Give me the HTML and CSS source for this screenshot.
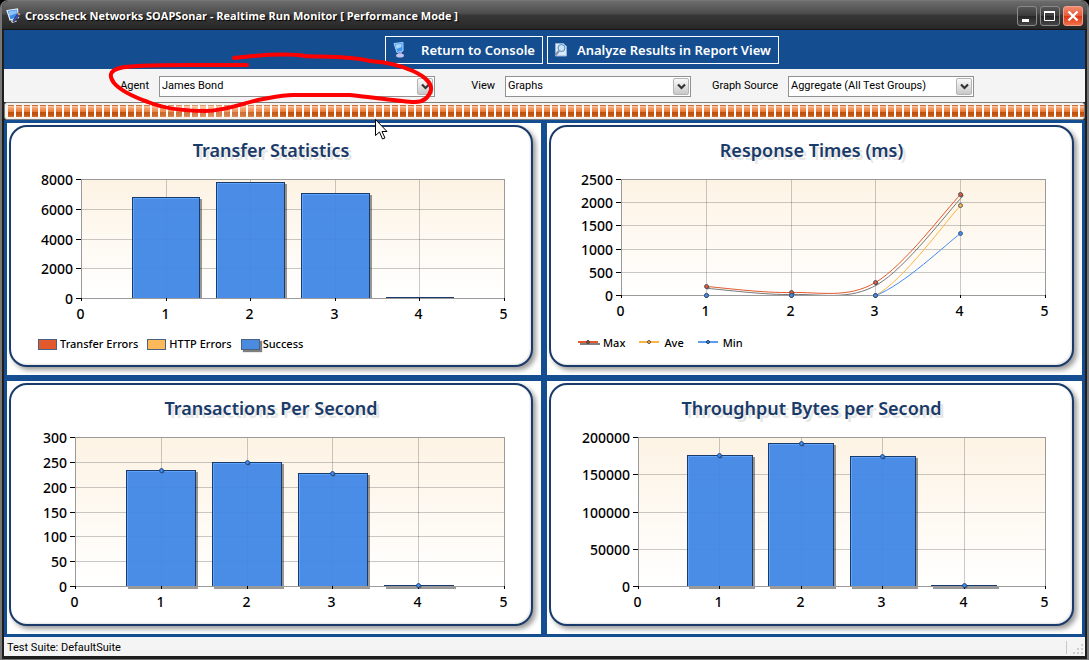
FILE: index.html
```html
<!DOCTYPE html>
<html lang="en">
<head>
<meta charset="utf-8">
<title>Crosscheck Networks SOAPSonar</title>
<link rel="stylesheet" href="styles.css">
</head>
<body>
<div class="window">
  <header class="titlebar">
    <svg class="app-icon" width="16" height="16" viewBox="0 0 16 16" aria-hidden="true">
      <path d="M1 2.500 11.500 1l1 8.500L4 12z" fill="#3b8ae6" stroke="#e4eefa" stroke-width="1.200"/>
      <path d="M2.500 3.500 10.500 2.300l.4 3L3.300 8z" fill="#8cc2f8"/>
      <path d="M4.500 12.500l5-1 1.500 2-5 1.500z" fill="#c6d3e6"/>
      <path d="M12.500 4.500 14.500 6 9 13l-2 .8.500-2z" fill="#3a4fc0" stroke="#2a2a44" stroke-width=".7"/>
      <path d="M12.500 4.500 14.500 6l-1.200 1.600-2-1.500z" fill="#e09a5a"/>
    </svg>
    <h1 class="titlebar-text">Crosscheck Networks SOAPSonar - Realtime Run Monitor [ Performance Mode ]</h1>
    <div class="window-buttons">
      <button class="window-button" type="button" aria-label="Minimize"><svg width="18" height="18" viewBox="0 0 18 18"><path d="M4 12h7v3H4z" fill="#fff"/></svg></button>
      <button class="window-button" type="button" aria-label="Maximize"><svg width="18" height="18" viewBox="0 0 18 18"><path d="M3.500 4.500h10v9h-10z" fill="none" stroke="#fff"/><path d="M3 4h11v2H3z" fill="#fff"/></svg></button>
      <button class="window-button window-button-close" type="button" aria-label="Close"><svg width="18" height="18" viewBox="0 0 18 18"><path d="M4.500 4.500l9 9m0-9l-9 9" stroke="#fff" stroke-width="2.400"/></svg></button>
    </div>
  </header>

  <nav class="toolbar">
    <button class="tool-button tool-button-console" type="button">
      <svg width="16" height="18" viewBox="0 0 16 18" aria-hidden="true">
        <path d="M3 2.500 12 1.500v8.500l-6 1.500z" fill="#3f97ee" stroke="#a9d4ff"/>
        <path d="M4.500 3.500l6-.6v3L5.500 8z" fill="#a6d8ff"/>
        <path d="M7 11.500l4-1v3H7z" fill="#8f93dc"/>
        <ellipse cx="9" cy="14.500" rx="4" ry="2" fill="#c0c3ee"/>
      </svg>
      Return to Console
    </button>
    <button class="tool-button" type="button">
      <svg width="16" height="18" viewBox="0 0 16 18" aria-hidden="true">
        <path d="M2.500 2.500h8l3 3V15h-11z" fill="#dce9f8" stroke="#8fb2dc"/>
        <circle cx="8.500" cy="7" r="3.500" fill="#c4e3fa" stroke="#5d86b8"/>
        <path d="M6 10l-3.500 4" stroke="#7c8cab" stroke-width="2"/>
      </svg>
      Analyze Results in Report View
    </button>
  </nav>

  <form class="filters">
    <label for="agent">Agent</label>
    <div class="dropdown"><select id="agent"><option>James Bond</option></select><span class="dropdown-arrow"><svg width="9" height="7" viewBox="0 0 9 7"><path d="M1 1.500l3.500 3.500L8 1.500" fill="none" stroke="#333" stroke-width="2.200"/></svg></span></div>
    <label for="view">View</label>
    <div class="dropdown"><select id="view"><option>Graphs</option></select><span class="dropdown-arrow"><svg width="9" height="7" viewBox="0 0 9 7"><path d="M1 1.500l3.500 3.500L8 1.500" fill="none" stroke="#333" stroke-width="2.200"/></svg></span></div>
    <label for="source">Graph Source</label>
    <div class="dropdown"><select id="source"><option>Aggregate (All Test Groups)</option></select><span class="dropdown-arrow"><svg width="9" height="7" viewBox="0 0 9 7"><path d="M1 1.500l3.500 3.500L8 1.500" fill="none" stroke="#333" stroke-width="2.200"/></svg></span></div>
  </form>

  <div class="progress" role="progressbar" aria-label="Test run"><div class="progress-blocks"></div></div>

  <main class="charts">
    <section class="panel"><div class="card">
      <h2 class="card-title">Transfer Statistics</h2>
      <svg class="chart" id="chart-transfer" viewBox="0 0 520 160"></svg>
      <ul class="legend">
        <li><span class="swatch swatch-red"></span>Transfer Errors</li>
        <li><span class="swatch swatch-amber"></span>HTTP Errors</li>
        <li><span class="swatch swatch-blue"></span>Success</li>
      </ul>
    </div></section>
    <section class="panel"><div class="card">
      <h2 class="card-title">Response Times (ms)</h2>
      <svg class="chart" id="chart-response" viewBox="0 0 521 160"></svg>
      <ul class="legend legend-lines">
        <li><svg width="22" height="8" viewBox="0 0 22 8"><path d="M2 5h20" stroke="#808080" stroke-width="2"/><path d="M0 3h20" stroke="#e2592b" stroke-width="2"/><circle cx="10" cy="3" r="1.500" fill="#b8402a" stroke="#444"/></svg>Max</li>
        <li><svg width="22" height="8" viewBox="0 0 22 8"><path d="M0 3h20" stroke="#fcb441" stroke-width="2"/><circle cx="10" cy="3" r="1.500" fill="#fcb441" stroke="#555"/></svg>Ave</li>
        <li><svg width="22" height="8" viewBox="0 0 22 8"><path d="M0 3h20" stroke="#5a9cf0" stroke-width="2"/><circle cx="10" cy="3" r="1.500" fill="#418cf0" stroke="#1a3b69"/></svg>Min</li>
      </ul>
    </div></section>
    <section class="panel"><div class="card">
      <h2 class="card-title">Transactions Per Second</h2>
      <svg class="chart" id="chart-transactions" viewBox="0 0 520 190"></svg>
    </div></section>
    <section class="panel"><div class="card">
      <h2 class="card-title">Throughput Bytes per Second</h2>
      <svg class="chart" id="chart-throughput" viewBox="0 0 521 190"></svg>
    </div></section>
  </main>

  <footer class="statusbar">
    <span>Test Suite: DefaultSuite</span>
    <svg width="18" height="15" viewBox="0 0 18 15" aria-hidden="true"><path d="M.5 1v13" stroke="#c8c8c8"/><path d="M15 4h2v2h-2zM11 8h2v2h-2zM15 8h2v2h-2zM7 12h2v2H7zM11 12h2v2h-2zM15 12h2v2h-2z" fill="#cfcfcf"/></svg>
  </footer>
</div>

<svg class="markup" width="440" height="145" viewBox="0 0 440 145" aria-hidden="true">
  <path d="M247 65H190C160 65 130 65 120 68C109 71 109 76 114 83C120 90 134 97 148 102C165 109 185 111 205 111C225 111 240 104 258 100C270 98 282 95 293 95H350C370 97 395 101 412 102C424 103 429 97 431 90C432 83 424 76 413 71C400 65 385 62 370 61C350 56 325 57 305 56C288 53 260 55 234 58" fill="none" stroke="#f00" stroke-width="4" stroke-linecap="round" stroke-linejoin="round"/>
  <path d="M375.500 119.500v16l4-3.500 3 7 2.500-1-3-6.500h5z" fill="#fff" stroke="#000"/>
</svg>
<script src="charts.js"></script>
</body>
</html>
```
FILE: styles.css
```css
* { box-sizing: border-box; }

body {
  margin: 0;
  background: #000;
  color: #000;
  font: 11px/16px Roboto, "Liberation Sans", sans-serif;
}

button, select { font: inherit; color: inherit; }

.window {
  display: flex;
  flex-direction: column;
  min-height: 100vh;
  border: 1px solid #777;
  border-width: 1px 2px;
  border-radius: 8px 8px 0 0;
  padding: 0 2px 3px;
  background: #1e1e1e;
}

.titlebar {
  display: flex;
  align-items: center;
  height: 29px;
  margin: 0 -2px;
  padding: 2px 4px 0 4px;
  border-bottom: 1px solid #141414;
  border-radius: 7px 7px 0 0;
  background: linear-gradient(#6c6c6c, #4c4c4c 45%, #383838 50%, #272727);
}

.titlebar-text {
  flex: 1;
  margin: 0 0 0 3px;
  color: #fff;
  font: 700 11px/16px "Open Sans", sans-serif;
  text-shadow: 1px 1px 1px #000;
}

.window-buttons { display: flex; gap: 3px; }

.window-button {
  display: grid;
  place-items: center;
  width: 20px;
  height: 20px;
  padding: 0;
  border: 1px solid #8a8a8a;
  border-radius: 3px;
  background: linear-gradient(#565656, #3a3a3a 50%, #262626 50%, #444);
}

.window-button-close {
  border-color: #f0a08c;
  background: linear-gradient(#f08a6c, #e8573a 50%, #dc3412 50%, #f0704a);
}

.toolbar {
  display: flex;
  justify-content: center;
  align-items: center;
  gap: 4px;
  height: 39px;
  padding-left: 75px;
  background: #144e90;
}

.tool-button {
  display: flex;
  align-items: center;
  gap: 8px;
  height: 28px;
  padding: 0 7px 0 5px;
  border: 1px solid #fff;
  background: none;
  color: #fff;
  font: 600 13px/16px "Noto Sans", sans-serif;
}

.tool-button-console { gap: 14px; }

.filters {
  display: grid;
  grid-template-columns: 145px 276px 50px 186px 77px 186px;
  column-gap: 10px;
  align-items: center;
  height: 33px;
  background: #f4f4f4;
}

.filters label { text-align: right; }

.dropdown {
  display: flex;
  height: 21px;
  margin-top: 1px;
  padding: 1px;
  border: 1px solid #919191;
  background: #fff;
}

.dropdown select {
  flex: 1;
  min-width: 0;
  padding: 0 1px;
  border: 0;
  background: #fff;
  appearance: none;
}

.dropdown-arrow {
  display: grid;
  place-items: center;
  width: 16px;
  border: 1px solid #b4b4b4;
  border-radius: 2px;
  background: linear-gradient(#fafafa, #c8c8c8);
}

.progress {
  height: 18px;
  padding: 2px 0 2px 3px;
  border: 1px solid #7c7c7c;
  border-radius: 3px;
  background: #f6f2ee;
}

.progress-blocks {
  height: 12px;
  background:
    repeating-linear-gradient(90deg, transparent 0 6px, #fff 6px 8px),
    linear-gradient(90deg, transparent 120px, rgba(255, 225, 200, .4) 200px, transparent 280px),
    linear-gradient(#c8713f 0 1px, #fbc9a4 1px, #f39259 4px, #e27832 7px, #bd4f0c 7px, #c2530f 10px, #d77236);
}

.charts {
  display: grid;
  flex: 1;
  grid-template-columns: 534fr 535fr;
  grid-template-rows: 252fr 253fr;
  gap: 6px;
  padding: 3px;
  background: #144e90;
}

.panel {
  display: flex;
  padding: 2px 8px 8px 2px;
  background: #fff;
}

.card {
  flex: 1;
  border: 2px solid #1a3b69;
  border-radius: 18px;
  background: #fff;
  box-shadow: 3px 3px 5px rgba(0, 0, 0, .4), inset -1px -1px 2px rgba(0, 0, 0, .12);
}

.card-title {
  margin: 0;
  padding: 11px 0 9px;
  color: #1a3b69;
  font: 600 18px/24px "Noto Sans", sans-serif;
  text-align: center;
  text-shadow: 3px 3px 0 #e6e6e6;
}

.chart {
  display: block;
  width: 100%;
  font: 500 14px "Noto Sans", sans-serif;
}

.frame { fill: none; stroke: #9a9a9a; }
.grid { stroke: rgba(64, 64, 64, .28); }
.tick { stroke: #000; }
.bar { fill: #418cf0; fill-opacity: .9; stroke: #1a3b69; }
.bar-glow { fill: none; stroke: #5fa4fa; }
.bar-shadow { fill: rgba(0, 0, 0, .4); }

.legend {
  display: flex;
  gap: 9px;
  margin: 0;
  padding: 5px 0 0 27px;
  list-style: none;
  font: 500 11px/16px "Noto Sans", sans-serif;
}

.legend li { display: flex; align-items: center; gap: 3px; }
.legend-lines { gap: 14px; padding-top: 4px; }

.swatch {
  width: 19px;
  height: 11px;
  border: 1px solid #4a6282;
}

.swatch-red { background: #e2592b; }
.swatch-amber { background: #fcb95a; }
.swatch-blue { background: #4a8be0; box-shadow: 2px 2px 1px rgba(0, 0, 0, .5); }

.statusbar {
  display: flex;
  justify-content: space-between;
  align-items: center;
  height: 19px;
  padding: 2px 1px 0 3px;
  background: #f4f4f4;
}

.markup {
  position: absolute;
  top: 0;
  left: 0;
  pointer-events: none;
}
```
FILE: charts.js
```js
const SVG = "http://www.w3.org/2000/svg";

function add(parent, name, attrs, text) {
  const el = document.createElementNS(SVG, name);
  for (const key in attrs) el.setAttribute(key, attrs[key]);
  if (text !== undefined) el.textContent = text;
  parent.appendChild(el);
  return el;
}

function crisp(v) { return Math.round(v) + 0.5; }

function drawChart(id, o) {
  const svg = document.getElementById(id);
  const w = o.right - o.left;
  const h = o.bottom - o.top;
  const px = v => o.left + v * w / 5;
  const py = v => o.bottom - v * h / o.max;

  const defs = add(svg, "defs", {});
  const grad = add(defs, "linearGradient", { id: id + "-bg", x1: 0, y1: 0, x2: 0, y2: 1 });
  add(grad, "stop", { offset: 0, "stop-color": "#fdf3e4" });
  add(grad, "stop", { offset: 1, "stop-color": "#ffffff" });
  const clip = add(defs, "clipPath", { id: id + "-clip" });
  add(clip, "rect", { x: o.left, y: o.top, width: w + 4, height: h + (o.markers ? 3 : 0) });

  add(svg, "rect", { x: o.left, y: o.top, width: w, height: h, fill: `url(#${id}-bg)` });
  for (let v = 0; v <= o.max; v += o.step) {
    const y = crisp(py(v));
    add(svg, "line", { class: "grid", x1: o.left, x2: o.right, y1: y, y2: y });
    add(svg, "line", { class: "tick", x1: o.left - 5, x2: o.left, y1: y, y2: y });
    add(svg, "text", { x: o.left - 8, y: y + 5, "text-anchor": "end" }, v);
  }
  for (let v = 0; v <= 5; v++) {
    const x = crisp(px(v));
    add(svg, "line", { class: "grid", x1: x, x2: x, y1: o.top, y2: o.bottom });
  }

  const plot = add(svg, "g", { "clip-path": `url(#${id}-clip)` });
  (o.bars || []).forEach((v, i) => {
    const half = w * 0.08;
    const x1 = Math.round(px(i + 1) - half);
    const x2 = Math.round(px(i + 1) + half) + 1;
    const y = Math.round(py(v));
    const bh = o.bottom - y;
    add(plot, "rect", { class: "bar-shadow", x: x1 + 2, y: y + 2, width: x2 - x1, height: bh + 1 });
    add(plot, "rect", { class: "bar", x: x1 + 0.5, y: y + 0.5, width: x2 - x1 - 1, height: bh });
    if (bh > 6) add(plot, "path", { class: "bar-glow", d: `M${x1 + 1.5} ${o.bottom}V${y + 1.5}H${x2 - 1}` });
  });

  add(svg, "rect", { class: "frame", x: o.left + 0.5, y: o.top + 0.5, width: w, height: h });
  for (let v = 0; v <= 5; v++) {
    const x = crisp(px(v));
    add(svg, "line", { class: "tick", x1: x, x2: x, y1: o.bottom, y2: o.bottom + 3 });
    add(svg, "text", { x: x - 1, y: o.bottom + 21, "text-anchor": "middle" }, v);
  }

  if (o.markers) {
    o.bars.forEach((v, i) => {
      add(svg, "circle", { cx: crisp(px(i + 1)) + 1, cy: crisp(py(v)) + 1, r: 2, fill: "#333", opacity: 0.5 });
      add(svg, "circle", { cx: crisp(px(i + 1)), cy: crisp(py(v)), r: 2, fill: "#418cf0", stroke: "#1a3b69", "stroke-width": 0.8 });
    });
  }

  (o.lines || []).forEach(line => {
    const pts = line.values.map((v, i) => [crisp(px(i + 1)), crisp(py(v))]);
    let d = `M${pts[0]}`;
    for (let i = 0; i < pts.length - 1; i++) {
      const a = pts[i - 1] || pts[i], b = pts[i], c = pts[i + 1], e = pts[i + 2] || c;
      d += `C${b[0] + (c[0] - a[0]) / 6} ${b[1] + (c[1] - a[1]) / 6} ${c[0] - (e[0] - b[0]) / 6} ${c[1] - (e[1] - b[1]) / 6} ${c}`;
    }
    if (line.shadow) add(plot, "path", { d, fill: "none", stroke: "#777", transform: "translate(2 2)" });
    add(plot, "path", { d, fill: "none", stroke: line.color });
    pts.forEach(([cx, cy]) => {
      if (line.shadow) add(svg, "circle", { cx: cx + 1, cy: cy + 1, r: 2, fill: "#777" });
      add(svg, "circle", { cx, cy, r: 2, fill: line.color, stroke: "#33445e", "stroke-width": 0.8 });
    });
  });
}

drawChart("chart-transfer", { left: 70, right: 493, top: 8, bottom: 127, max: 8000, step: 2000, bars: [6800, 7765, 7090, 80] });
drawChart("chart-response", {
  left: 70, right: 494, top: 8, bottom: 124, max: 2500, step: 500,
  lines: [
    { color: "#e2592b", shadow: true, values: [190, 70, 280, 2180] },
    { color: "#fcb441", values: [10, 10, 10, 1950] },
    { color: "#418cf0", values: [0, 0, 0, 1340] }
  ]
});
drawChart("chart-transactions", { left: 64, right: 493, top: 8, bottom: 157, max: 300, step: 50, markers: true, bars: [234, 250, 228, 3] });
drawChart("chart-throughput", { left: 87, right: 494, top: 8, bottom: 157, max: 200000, step: 50000, markers: true, bars: [175800, 192000, 174500, 1500] });
```
